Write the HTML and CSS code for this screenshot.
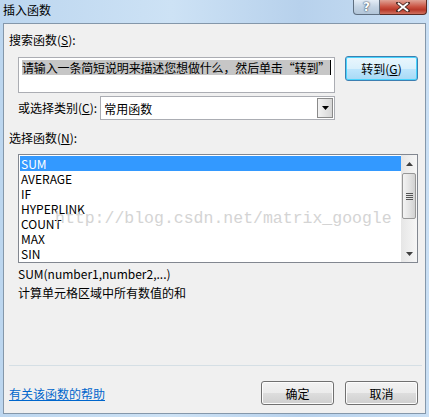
FILE: index.html
```html
<!DOCTYPE html>
<html lang="zh-CN">
<head>
  <meta charset="UTF-8" />
  <title>插入函数</title>
  <link rel="stylesheet" href="styles.css">
</head>
<body>
  <div class="window">
    <div class="titlebar">
      <span class="title">插入函数</span>
      <div class="caption">
        <span class="cap-help">?</span>
        <span class="cap-close">
          <svg width="14" height="10" viewBox="0 0 14 10"><path d="M2 1 L12 9 M12 1 L2 9" stroke="#4a2a24" stroke-width="3.6" stroke-linecap="square"/><path d="M2 1 L12 9 M12 1 L2 9" stroke="#fff" stroke-width="2"/></svg>
        </span>
      </div>
    </div>

    <div class="client">
      <div class="label top-label">搜索函数(<u>S</u>):</div>

      <div class="search-row">
        <div class="textbox"><span class="sel">请输入一条简短说明来描述您想做什么，然后单击“转到”</span><span class="caret"></span></div>
        <button class="btn btn-default">转到(<u>G</u>)</button>
      </div>

      <div class="cat-row">
        <span class="label">或选择类别(<u>C</u>):</span>
        <div class="select">
          <span class="select-text">常用函数</span>
          <span class="select-arrow"><svg width="7" height="4" viewBox="0 0 7 4"><path d="M0 0 H7 L3.5 4 Z" fill="#000"/></svg></span>
        </div>
      </div>

      <div class="label list-label">选择函数(<u>N</u>):</div>

      <div class="listbox">
        <ul class="items">
          <li class="selected">SUM</li>
          <li>AVERAGE</li>
          <li>IF</li>
          <li>HYPERLINK</li>
          <li>COUNT</li>
          <li>MAX</li>
          <li>SIN</li>
        </ul>
        <div class="scrollbar">
          <span class="arrow"><svg width="7" height="4" viewBox="0 0 7 4"><path d="M0 4 H7 L3.5 0 Z" fill="#404040"/></svg></span>
          <div class="track">
            <div class="thumb"><span class="grip"></span></div>
          </div>
          <span class="arrow"><svg width="7" height="4" viewBox="0 0 7 4"><path d="M0 0 H7 L3.5 4 Z" fill="#404040"/></svg></span>
        </div>
        <div class="watermark">http://blog.csdn.net/matrix_google</div>
      </div>

      <div class="desc">SUM(number1,number2,...)</div>
      <div class="desc desc-cn">计算单元格区域中所有数值的和</div>

      <div class="footer">
        <div class="separator"></div>
        <div class="footer-row">
          <a class="help-link" href="#">有关该函数的帮助</a>
          <div class="buttons">
            <button class="btn">确定</button>
            <button class="btn">取消</button>
          </div>
        </div>
      </div>
    </div>
  </div>
</body>
</html>
```

FILE: styles.css
```css
body {
  margin: 0;
  font-family: "Noto Sans CJK SC", "Noto Sans", sans-serif;
  font-size: 12px;
  color: #000;
}

.window {
  width: 429px;
  height: 417px;
  display: flex;
  flex-direction: column;
  background: linear-gradient(90deg, #bcd6ef, #cde2f5 40%, #b7d1ec 70%, #c9dff4);
}

.titlebar {
  height: 23px;
  display: flex;
  justify-content: space-between;
  align-items: flex-start;
  flex-shrink: 0;
}

.title {
  margin: 2px 0 0 3px;
  font-size: 12px;
  line-height: 16px;
}

.caption {
  display: flex;
  margin-right: 2px;
}

.cap-help {
  width: 27px;
  height: 15px;
  box-sizing: border-box;
  border: 1px solid #5f6f80;
  border-top: none;
  border-radius: 0 0 0 4px;
  background: linear-gradient(#e4edf6, #c3d3e3 50%, #b2c5d8);
  color: #fff;
  font-family: "DejaVu Sans", sans-serif;
  font-weight: bold;
  font-size: 12px;
  line-height: 14px;
  text-align: center;
  text-shadow: 0 0 2px #34475a, 0 0 1px #34475a;
}

.cap-close {
  width: 47px;
  height: 15px;
  box-sizing: border-box;
  border: 1px solid #5b2a22;
  border-left: none;
  border-top: none;
  border-radius: 0 0 4px 0;
  background: linear-gradient(#e0a396, #c9503f 50%, #b8392a 70%, #d0715f);
  display: flex;
  justify-content: center;
  align-items: center;
}

.client {
  flex: 1;
  margin: 0 3px 3px 3px;
  border: 1px solid #8497aa;
  background: #f0f0f0;
  display: flex;
  flex-direction: column;
}

.label {
  line-height: 16px;
  white-space: nowrap;
}

.top-label {
  margin: 8px 0 0 5px;
}

.search-row {
  display: flex;
  align-items: flex-start;
  margin: 8px 0 0 14px;
}

.textbox {
  width: 317px;
  height: 36px;
  box-sizing: border-box;
  margin-top: 1px;
  border: 1px solid #abadb3;
  background: #fff;
  padding: 2px 0 0 3px;
  display: flex;
  align-items: flex-start;
  white-space: nowrap;
  overflow: hidden;
}

.sel {
  background: #c6c6c6;
  line-height: 15px;
  height: 15px;
  letter-spacing: -0.15px;
}

.caret {
  width: 1px;
  height: 15px;
  background: #000;
}

.btn {
  width: 73px;
  height: 24px;
  box-sizing: border-box;
  border: 1px solid #707070;
  border-radius: 3px;
  background: linear-gradient(#f2f2f2, #ebebeb 50%, #dddddd 51%, #cfcfcf);
  box-shadow: inset 0 0 0 1px #fcfcfc;
  font-family: "Noto Sans CJK SC", sans-serif;
  font-size: 12px;
  padding: 0;
  color: #000;
}

.btn-default {
  margin-left: 10px;
  height: 25px;
  border-color: #3c7fb1;
  box-shadow: inset 0 0 0 1px #48d4fd;
  background: linear-gradient(#eaf6fd, #d9f0fc 50%, #bee6fd 51%, #a7d9f5);
}

.cat-row {
  display: flex;
  align-items: center;
  margin: 3px 0 0 14px;
}

.select {
  margin-left: 3px;
  width: 235px;
  height: 24px;
  box-sizing: border-box;
  border: 1px solid #abadb3;
  background: #fff;
  display: flex;
  align-items: center;
  justify-content: space-between;
}

.select-text {
  padding-left: 3px;
}

.select-arrow {
  width: 16px;
  height: 20px;
  margin-right: 1px;
  box-sizing: border-box;
  border: 1px solid #8a8a8a;
  background: linear-gradient(90deg, #f2f2f2, #d6d6d6);
  display: flex;
  align-items: center;
  justify-content: center;
}

.list-label {
  margin: 10px 0 0 5px;
}

.listbox {
  position: relative;
  margin: 8px 0 0 14px;
  width: 400px;
  height: 109px;
  box-sizing: border-box;
  border: 1px solid #828790;
  background: #fff;
  display: flex;
  padding: 1px 0 1px 1px;
}

.items {
  list-style: none;
  margin: 0;
  padding: 0;
  flex: 1;
}

.items li {
  height: 15px;
  line-height: 15px;
  padding-left: 1px;
}

.items li.selected {
  background: #3399ff;
  color: #fff;
}

.scrollbar {
  width: 16px;
  margin-top: -1px;
  margin-bottom: -1px;
  background: linear-gradient(90deg, #e6e6e6, #f6f6f6);
  display: flex;
  flex-direction: column;
}

.arrow {
  height: 17px;
  display: flex;
  align-items: center;
  justify-content: center;
}

.track {
  flex: 1;
}

.thumb {
  margin: 1px 1px 0 1px;
  height: 46px;
  box-sizing: border-box;
  border: 1px solid #979797;
  border-radius: 2px;
  background: linear-gradient(90deg, #f3f3f3, #e4e4e4 50%, #d2d2d2);
  display: flex;
  align-items: center;
  justify-content: center;
}

.grip {
  width: 7px;
  height: 7px;
  background: repeating-linear-gradient(#555 0 1px, transparent 1px 2px);
}

.watermark {
  position: absolute;
  left: 36px;
  top: 55px;
  font-family: "Liberation Mono", monospace;
  font-size: 16.5px;
  line-height: 18px;
  color: #d4d4d4;
  white-space: nowrap;
}

.desc {
  margin: 3px 0 0 14px;
  line-height: 16px;
}

.desc-cn {
  margin-top: 3px;
}

.footer {
  margin-top: auto;
  padding: 0 5px 8px 5px;
}

.separator {
  height: 1px;
  background: #d5dfe5;
  margin-right: -2px;
}

.footer-row {
  margin-top: 15px;
  display: flex;
  justify-content: space-between;
  align-items: center;
}

.help-link {
  color: #0066cc;
  text-decoration: underline;
}

.buttons {
  display: flex;
  gap: 11px;
  margin-right: 2px;
}
```
